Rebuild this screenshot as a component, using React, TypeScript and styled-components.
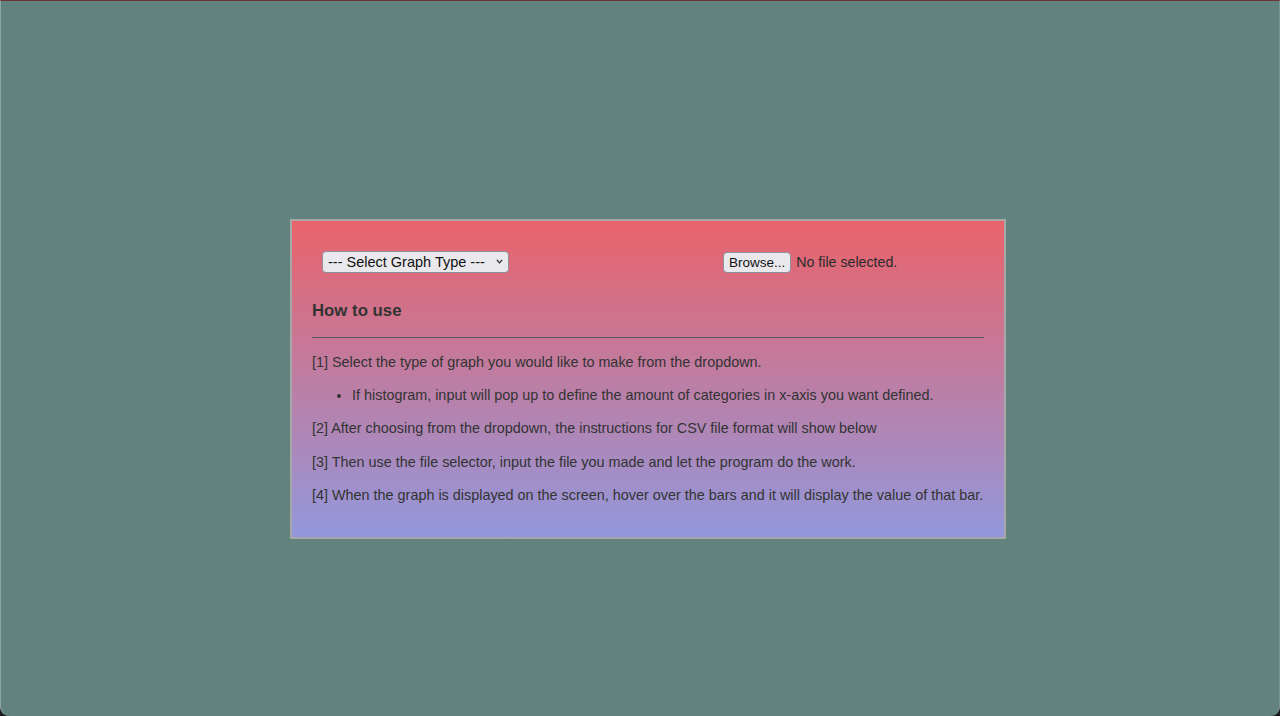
import React from "react";
import styled, { createGlobalStyle } from "styled-components";

const Global = createGlobalStyle`
  html, body { margin: 0; padding: 0; background: #1a1a1a; }
  body { font-family: "Liberation Sans", Arial, sans-serif; }
  * { box-sizing: border-box; }
`;

const Screen = styled.div`
  width: 1280px;
  height: 716px;
  background: #62827e;
  border-top: 1px solid #6e3038;
  border-left: 1px solid #8ea6a2;
  border-right: 1px solid #7a9591;
  border-radius: 0 0 9px 9px;
  display: flex;
  justify-content: flex-start;
  align-items: flex-start;
  padding: 218px 0 0 289px;
`;

const Panel = styled.div`
  width: 716px;
  border: 2px solid #a7a7a7;
  background: linear-gradient(to bottom, #e9636a 0%, #9298dc 100%);
  padding: 30px 20px 32px 20px;
  color: #333;
  font-size: 14.4px;
`;

const Controls = styled.div`
  display: flex;
  align-items: center;
  padding: 0 10px;
`;

const SelectWrap = styled.div`
  position: relative;
  width: 187px;
  height: 22px;
`;

const Select = styled.select`
  appearance: none;
  -webkit-appearance: none;
  width: 100%;
  height: 100%;
  font-family: "Liberation Sans", Arial, sans-serif;
  font-size: 14.5px;
  color: #111;
  background: #e9e9ed;
  border: 1px solid #8f8f9d;
  border-radius: 4px;
  padding: 0 18px 0 5px;
`;

const Chevron = styled.svg`
  position: absolute;
  right: 6px;
  top: 8px;
  width: 7px;
  height: 5px;
  pointer-events: none;
`;

const FileBox = styled.div`
  margin-left: 214px;
  display: flex;
  align-items: center;
  gap: 5px;
  font-size: 14.2px;
  color: #2a2a2a;
`;

const BrowseButton = styled.button`
  height: 21px;
  padding: 0 5px;
  font-family: "Liberation Sans", Arial, sans-serif;
  font-size: 13.5px;
  color: #111;
  background: #e9e9ed;
  border: 1px solid #8f8f9d;
  border-radius: 4px;
`;

const Heading = styled.h3`
  margin: 28px 0 0 0;
  font-size: 16.8px;
  font-weight: bold;
  line-height: 20px;
`;

const Rule = styled.hr`
  margin: 16px 0 15px 0;
  border: none;
  border-top: 1px solid #555;
  height: 0;
`;

const Step = styled.p`
  margin: 0;
  line-height: 19px;
  & + & { margin-top: 14.2px; }
`;

const SubList = styled.ul`
  margin: 14.2px 0;
  padding-left: 40px;
  line-height: 19px;
`;

export default function App() {
  return (
    <>
      <Global />
      <Screen>
        <Panel>
          <Controls>
            <SelectWrap>
              <Select defaultValue="">
                <option value="">--- Select Graph Type ---</option>
                <option value="bar">Bar Graph</option>
                <option value="histogram">Histogram</option>
              </Select>
              <Chevron viewBox="0 0 7 5">
                <path d="M0.8 0.8 L3.5 3.8 L6.2 0.8" fill="none" stroke="#222" strokeWidth="1.2" />
              </Chevron>
            </SelectWrap>
            <FileBox>
              <BrowseButton>Browse...</BrowseButton>
              <span>No file selected.</span>
            </FileBox>
          </Controls>
          <Heading>How to use</Heading>
          <Rule />
          <Step>[1] Select the type of graph you would like to make from the dropdown.</Step>
          <SubList>
            <li>If histogram, input will pop up to define the amount of categories in x-axis you want defined.</li>
          </SubList>
          <Step>[2] After choosing from the dropdown, the instructions for CSV file format will show below</Step>
          <Step>[3] Then use the file selector, input the file you made and let the program do the work.</Step>
          <Step>[4] When the graph is displayed on the screen, hover over the bars and it will display the value of that bar.</Step>
        </Panel>
      </Screen>
    </>
  );
}
